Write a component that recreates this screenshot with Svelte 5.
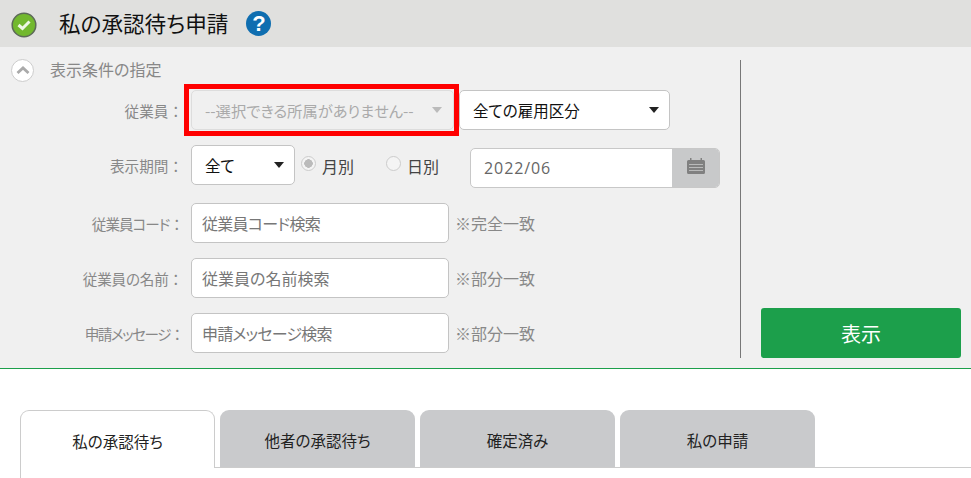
<script lang="ts">
	const tabs = ['私の承認待ち', '他者の承認待ち', '確定済み', '私の申請'];
	// the original font sets kana narrower than ours, hence the per-row spacing
	const searches = [
		{ label: '従業員コード', placeholder: '従業員コード検索', note: '※完全一致', labelGap: '-1px', inputGap: '-0.7px' },
		{ label: '従業員の名前', placeholder: '従業員の名前検索', note: '※部分一致', labelGap: '-0.2px', inputGap: '0' },
		{ label: '申請メッセージ', placeholder: '申請メッセージ検索', note: '※部分一致', labelGap: '-1.5px', inputGap: '-0.8px' }
	];
</script>

<div class="page">
	<header class="title">
		<svg class="ok" width="26" height="26" viewBox="0 0 26 26" aria-hidden="true">
			<circle cx="13" cy="13" r="11.800" fill="#72b82e" stroke="#5d6a58" stroke-width="1.500" />
			<path d="M7.500 13l4 3.500 7-7" fill="none" stroke="#eef7e4" stroke-width="3" />
		</svg>
		<h1>私の承認待ち申請</h1>
		<span class="help">?</span>
	</header>

	<section class="panel">
		<div class="filters">
			<div class="toggle">
				<span class="chevron">
					<svg width="14" height="8" viewBox="0 0 14 8" aria-hidden="true">
						<path d="M1.500 7l5.500-5 5.500 5" fill="none" stroke="#aaa" stroke-width="2.800" />
					</svg>
				</span>
				<span class="toggle-text">表示条件の指定</span>
			</div>

			<div class="row first">
				<span class="label">従業員</span>
				<div class="select disabled">
					<span>--選択できる所属がありません--</span>
					<i class="arrow"></i>
				</div>
				<div class="select kinds">
					<span>全ての雇用区分</span>
					<i class="arrow"></i>
				</div>
			</div>

			<div class="row period">
				<span class="label">表示期間</span>
				<div class="select range">
					<span>全て</span>
					<i class="arrow"></i>
				</div>
				<span class="radio on"></span>
				<span class="radio-text month">月別</span>
				<span class="radio"></span>
				<span class="radio-text">日別</span>
				<div class="date">
					<span class="date-value">2022/06</span>
					<span class="date-btn">
						<svg width="18" height="16" viewBox="0 0 18 16" aria-hidden="true">
							<path fill="#808080" d="M0 3.500a1.500 1.500 0 0 1 1.500-1.500H3V0h1.500v2h9V0H15v2h1.500A1.500 1.500 0 0 1 18 3.500v11a1.500 1.500 0 0 1-1.500 1.500h-15A1.500 1.500 0 0 1 0 14.500z" />
							<path stroke="#b9baba" stroke-width="1" d="M2 6.500h14M2 9.500h14M2 12.500h14" />
						</svg>
					</span>
				</div>
			</div>

			{#each searches as s}
				<div class="row search">
					<span class="label" style:letter-spacing={s.labelGap}>{s.label}</span>
					<input class="text" style:letter-spacing={s.inputGap} placeholder={s.placeholder} />
					<span class="note">{s.note}</span>
				</div>
			{/each}
		</div>

		<div class="side">
			<button class="show">表示</button>
		</div>
	</section>

	<nav class="tabs">
		{#each tabs as tab, i}
			<div class="tab" class:active={i === 0}>{tab}</div>
		{/each}
	</nav>
	<div class="tab-body"></div>
</div>

<style>
	:global(body) {
		background: #fff;
	}

	.page {
		width: 971px;
		height: 478px;
		overflow: hidden;
		font-family: 'Noto Sans CJK JP', 'Noto Sans', sans-serif;
		font-size: 15.5px;
		font-feature-settings: 'palt';
		color: #222;
	}

	.title {
		height: 47px;
		background: #e0e0de;
		display: flex;
		align-items: center;
		padding-left: 11px;
	}

	.ok {
		margin-top: 3px;
	}

	.title h1 {
		margin: -1px 0 0 22px;
		font-size: 21.600px;
		font-weight: 400;
		color: #111;
		line-height: 1;
	}

	.help {
		width: 25px;
		height: 25px;
		margin: -1px 0 0 18px;
		border-radius: 50%;
		background: #0f6eb0;
		color: #fff;
		font: 700 22px/25px 'Liberation Sans', sans-serif;
		text-align: center;
	}

	.panel {
		height: 321px;
		background: #f0f0f0;
		border-bottom: 1px solid #1c9f4b;
		display: flex;
	}

	.filters {
		width: 741px;
		box-sizing: border-box;
		border-right: 1px solid #777;
		margin-top: 13px;
		height: 298px;
	}

	.toggle {
		display: flex;
		align-items: center;
		gap: 16px;
		padding-left: 11px;
		height: 20px;
		color: #888;
	}

	.toggle-text {
		font-size: 16px;
		margin-top: -3px;
	}

	.chevron {
		width: 23px;
		height: 23px;
		box-sizing: border-box;
		border: 1px solid #ccc;
		border-radius: 50%;
		background: #fff;
		display: flex;
		align-items: center;
		justify-content: center;
	}

	.row {
		display: flex;
		align-items: center;
		height: 40px;
		margin-top: 15px;
	}

	.row.first {
		margin-top: 10px;
	}

	.row.period + .search {
		margin-top: 18px;
	}

	.label {
		width: 183px;
		flex: none;
		margin-right: 8px;
		text-align: right;
		font-size: 14.600px;
		color: #888;
		white-space: nowrap;
	}

	.label::after {
		content: '：';
		font-feature-settings: normal;
	}

	.select {
		height: 40px;
		box-sizing: border-box;
		border: 1px solid #c4c4c4;
		border-radius: 5px;
		background: #fff;
		color: #111;
		display: flex;
		align-items: center;
		justify-content: space-between;
		padding: 0 10px 0 13px;
	}

	.select.disabled {
		width: 263px;
		position: relative;
		background: #f0f0f0;
		border-color: #ddd;
		color: #aaa;
		font-size: 15.300px;
		margin-right: 5px;
		padding-right: 11px;
	}

	/* red annotation drawn over the screenshot */
	.select.disabled::after {
		content: '';
		position: absolute;
		inset: -7px -6px -7px -8px;
		border: 5px solid #f00;
	}

	.select.disabled .arrow {
		border-top-color: #bbb;
	}

	.select.kinds {
		width: 211px;
	}

	.select.range {
		width: 104px;
	}

	.arrow {
		width: 0;
		height: 0;
		border: 5px solid transparent;
		border-top: 6px solid #222;
		border-bottom: 0;
	}

	.radio {
		width: 15px;
		height: 15px;
		box-sizing: border-box;
		border: 1px solid #ccc;
		border-radius: 50%;
		background: #f4f4f4;
		margin: -4px 0 0 6px;
	}

	.radio.on {
		background: radial-gradient(circle, #bbb 0 4px, #f4f4f4 4.500px);
	}

	.radio-text {
		font-size: 16px;
		color: #444;
		margin: 1px 0 0 6px;
	}

	.radio-text.month {
		margin-right: 26px;
	}

	.date {
		display: flex;
		width: 250px;
		height: 40px;
		box-sizing: border-box;
		margin: 6px 0 0 31px;
		border: 1px solid #c8c8c8;
		border-radius: 5px;
		background: #fff;
		overflow: hidden;
	}

	.date-value {
		flex: 1;
		padding-left: 13px;
		line-height: 38px;
		color: #666;
		font-family: 'Open Sans', sans-serif;
		font-size: 16px;
		letter-spacing: 0.9px;
	}

	.date-btn {
		width: 47px;
		background: #c8c9ca;
		display: flex;
		align-items: center;
		justify-content: center;
		padding-bottom: 5px;
		box-sizing: border-box;
	}

	.text {
		width: 258px;
		height: 40px;
		box-sizing: border-box;
		border: 1px solid #c4c4c4;
		border-radius: 5px;
		background: #fff;
		padding: 0 10px;
		font: inherit;
		font-size: 16px;
		outline: none;
	}

	.text::placeholder {
		color: #777;
		opacity: 1;
	}

	.note {
		font-size: 16px;
		margin-left: 6px;
		color: #888;
	}

	.side {
		flex: 1;
		display: flex;
		align-items: flex-end;
		justify-content: flex-end;
		padding: 0 10px 10px 0;
	}

	.show {
		width: 200px;
		height: 50px;
		border: 0;
		border-radius: 3px;
		background: #1c9f4b;
		color: #fff;
		font: inherit;
		font-size: 20px;
	}

	.tabs {
		display: flex;
		gap: 5px;
		margin: 41px 0 0 20px;
		height: 57px;
		border-bottom: 1px solid #ccc;
	}

	.tab {
		width: 195px;
		height: 57px;
		box-sizing: border-box;
		border-radius: 9px 9px 0 0;
		background: #c9cacc;
		text-align: center;
		line-height: 60px;
		color: #222;
	}

	.tab.active {
		background: #fff;
		border: 1px solid #ccc;
		border-bottom: 0;
		height: 58px;
	}

	.tab-body {
		margin-left: 20px;
		height: 20px;
		border-left: 1px solid #ccc;
	}
</style>
